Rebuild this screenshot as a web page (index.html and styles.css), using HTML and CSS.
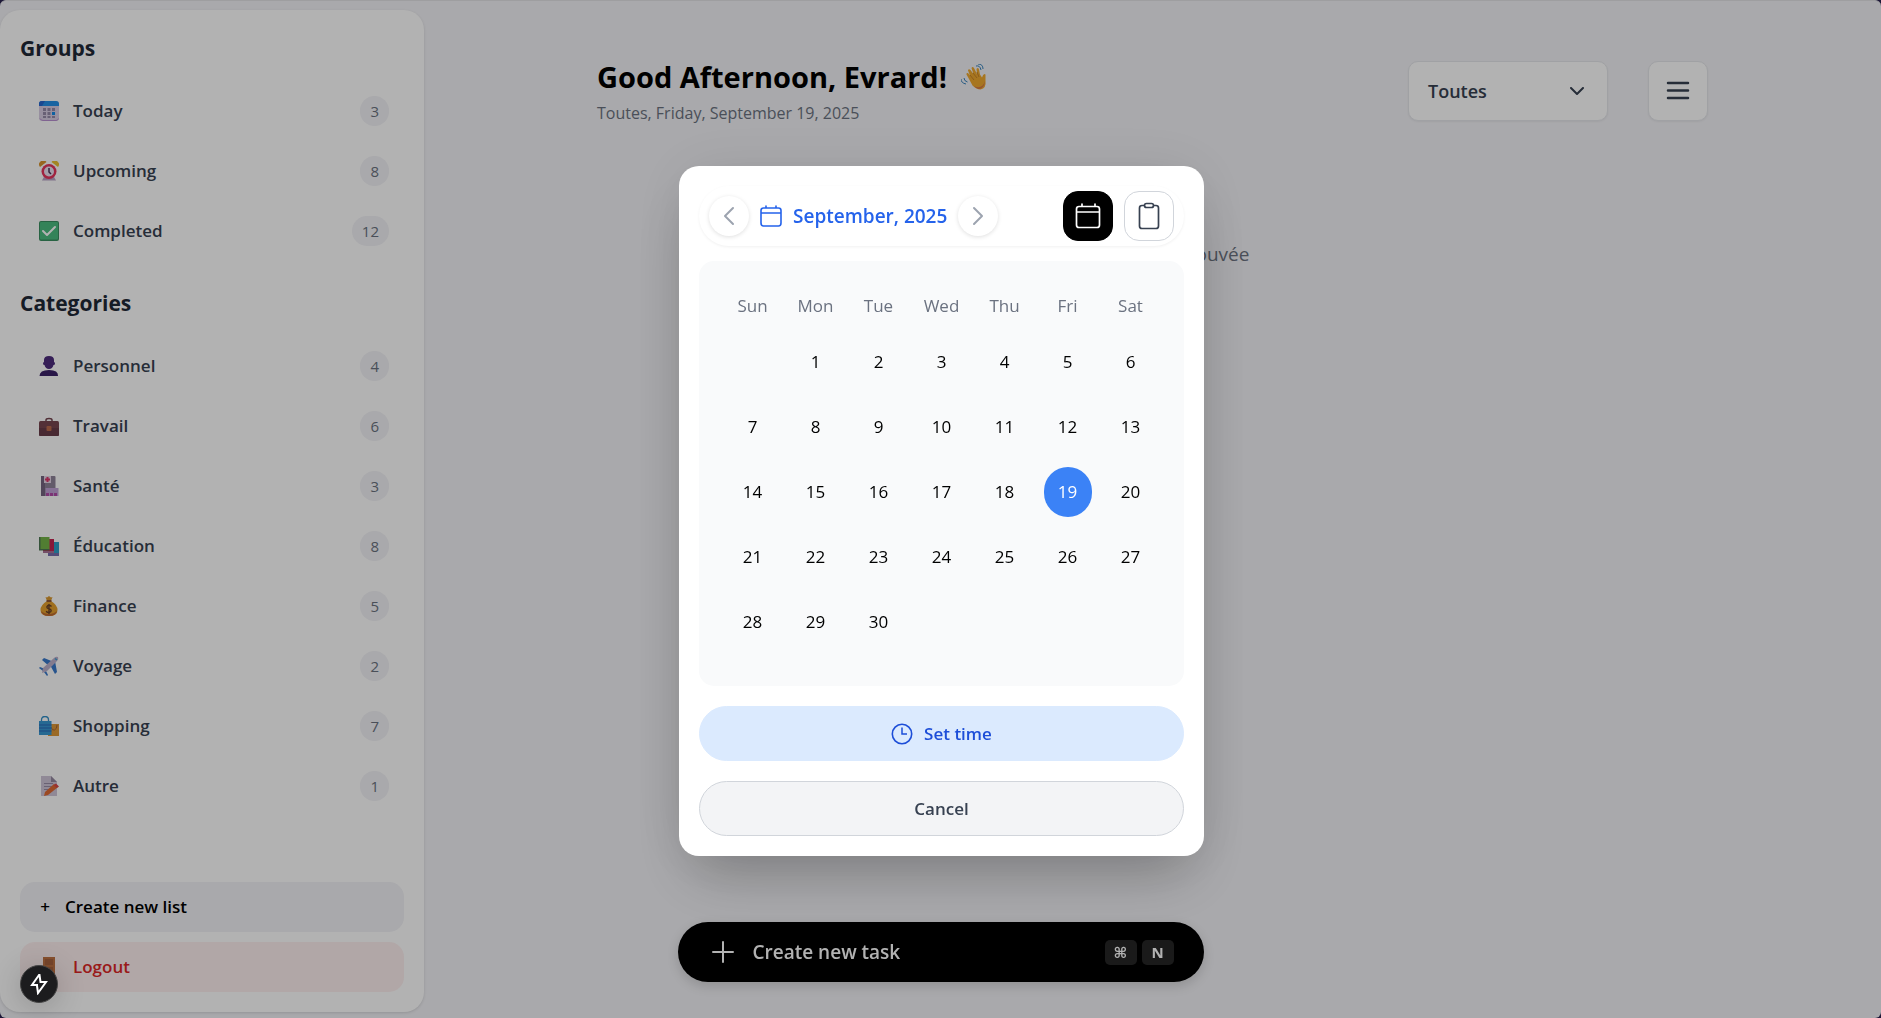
FILE: index.html
```html
<!DOCTYPE html>
<html lang="fr">
<head>
<meta charset="utf-8">
<meta name="viewport" content="width=device-width, initial-scale=1">
<title>Tasks</title>
<link rel="stylesheet" href="styles.css">
</head>
<body>
<div class="app">
  <aside class="sidebar">
    <h2 class="side-title">Groups</h2>
    <ul class="side-list">
      <li><a class="side-link" href="#today"><svg class="emoji" viewBox="0 0 20 20"><rect x="0" y="0" width="20" height="20" rx="3" fill="#d9cde4"/><path d="M0 5V3a3 3 0 0 1 3-3h14a3 3 0 0 1 3 3v2z" fill="#2490e8"/><path d="M0 5V3a3 3 0 0 1 3-3h3L3 5z" fill="#2766cf"/><path d="M1 17.500q1 2 3 2h13q2 0 2.500-2" fill="none" stroke="#b88fd0"/><g fill="#968aa8"><rect x="4" y="7" width="3" height="3"/><rect x="8.500" y="7" width="3" height="3"/><rect x="13" y="7" width="3" height="3"/><rect x="4" y="11" width="3" height="3"/><rect x="8.500" y="11" width="3" height="3"/><rect x="4" y="15" width="3" height="2"/><rect x="8.500" y="15" width="3" height="2"/><rect x="13" y="15" width="3" height="2"/></g><rect x="13" y="11" width="3" height="3" fill="#168be8"/></svg><span class="side-name">Today</span><span class="count">3</span></a></li>
      <li><a class="side-link" href="#upcoming"><svg class="emoji" viewBox="0 0 20 20"><path d="M3 19.500 5.500 15h9l2.500 4.500z" fill="#b9a3c6"/><path d="M1 6a4 4 0 0 1 6.500-5z" fill="#d9932e"/><path d="M19 6a4 4 0 0 0-6.500-5z" fill="#eac033"/><circle cx="10" cy="10.500" r="7.500" fill="#e5345c"/><circle cx="10" cy="10.500" r="5" fill="#ebe2f2"/><path d="M10 7v4l2 2" fill="none" stroke="#4d3358" stroke-width="1.500"/></svg><span class="side-name">Upcoming</span><span class="count">8</span></a></li>
      <li><a class="side-link" href="#completed"><svg class="emoji" viewBox="0 0 20 20"><rect width="20" height="20" rx="2" fill="#3a8f60"/><rect x="1" y="1" width="18" height="17.500" rx="1" fill="#4bbc80"/><path d="m4 10 4 4 8-8" fill="none" stroke="#fff" stroke-width="2" stroke-linecap="round" stroke-linejoin="round"/></svg><span class="side-name">Completed</span><span class="count">12</span></a></li>
    </ul>
    <h2 class="side-title side-title-next">Categories</h2>
    <ul class="side-list">
      <li><a class="side-link" href="#personnel"><svg class="emoji" viewBox="0 0 20 20"><path d="M5 4q0-4 5-4t5 4v2q1 0 1 1.500T14.500 9q-1 4-4.500 4T5.500 9Q4 9 4 7.500T5 6z" fill="#4c2c7c"/><path d="M.5 20q0-6 9.500-6t9 6z" fill="#3c2268"/></svg><span class="side-name">Personnel</span><span class="count">4</span></a></li>
      <li><a class="side-link" href="#travail"><svg class="emoji" viewBox="0 0 20 20"><path d="M7 5V4q0-1.500 3-1.500T13 4v1" fill="none" stroke="#754550" stroke-width="1.500"/><rect y="5" width="20" height="15" rx="1.500" fill="#784650"/><path d="M0 12h20v6.500q0 1.500-1.500 1.500h-17Q0 20 0 18.500z" fill="#673b48"/><rect x="7.500" y="10" width="5" height="5" rx="1" fill="#ba6b4d"/></svg><span class="side-name">Travail</span><span class="count">6</span></a></li>
      <li><a class="side-link" href="#sante"><svg class="emoji" viewBox="0 0 20 20"><rect x="2" width="14.500" height="20" rx="1" fill="#8f8399"/><rect x="2" width="4" height="20" fill="#746580"/><rect x="5" y="0" width="7" height="7" fill="#e4d5e5"/><path d="M8.500 1v5M6 3.500h5" stroke="#d8356a" stroke-width="2"/><rect x="6.500" y="12" width="13" height="8" fill="#c0a3d6"/><path d="M7 18.500h12" stroke="#b24ba8" stroke-width="3" stroke-dasharray="3 1"/></svg><span class="side-name">Santé</span><span class="count">3</span></a></li>
      <li><a class="side-link" href="#education"><svg class="emoji" viewBox="0 0 20 20"><path d="M9 6h11v13H9z" fill="#2d9fc8"/><path d="M9 17h11v3H9z" fill="#766ead"/><path d="M4 3h11v13H4z" fill="#c32452"/><path d="M4 15h11v2H4z" fill="#a97195"/><path d="M0 1h10.500v12.500H0z" fill="#75b448"/><path d="M0 1h1.500v12H0zM0 13h10.500v1.500H0z" fill="#4e7754"/></svg><span class="side-name">Éducation</span><span class="count">8</span></a></li>
      <li><a class="side-link" href="#finance"><svg class="emoji" viewBox="0 0 20 20"><path d="m6.500 1 1.500.5L10 0l2 1.500 1.500-.5-1.500 4H8z" fill="#d99830"/><path d="M8 5h4q6.500 4 6.500 9 0 6-8.500 6t-8.500-6q0-5 6.500-9z" fill="#e49f2d"/><path d="M2 15q1 5 8 5t8-5q-3 3-8 3t-8-3z" fill="#bd6932"/><path d="M7.500 5h5" stroke="#7b4130" stroke-width="1.500"/><path d="M12.500 10.500q-1-1.300-2.500-1.300T7.800 11q0 1.300 2.200 1.800t2.200 1.900-2.200 1.800-2.700-1.500M10 8v10" fill="none" stroke="#6b4228" stroke-width="1.400"/></svg><span class="side-name">Finance</span><span class="count">5</span></a></li>
      <li><a class="side-link" href="#voyage"><svg class="emoji" viewBox="0 0 20 20"><path d="m3 4 2-2 10 4-5 4zM16 5l2 11-2 2-5-9zM0 12l1-1 5 2-2 2zM7 15l2 4-1 1-3-4z" fill="#3979ca"/><path d="M19 1q1 2-1 4L8 15l-5 2 1-5 11-10q2-2 4-1z" fill="#bcb0cc"/><path d="M16 2.500 18 4" stroke="#3e9bd0" stroke-width="1.500"/></svg><span class="side-name">Voyage</span><span class="count">2</span></a></li>
      <li><a class="side-link" href="#shopping"><svg class="emoji" viewBox="0 0 20 20"><path d="M9 8h11v12H9z" fill="#dd9736"/><path d="M12 11q1 4 3.500 3T18 9" fill="none" stroke="#a56335"/><path d="M2.500 6V4q0-3.500 3.500-3.500T9.500 4v2" fill="none" stroke="#318fc7" stroke-width="1.300"/><path d="M0 5h12.500v14H0z" fill="#3797d2"/><path d="M0 9h12.500M0 12h12.500M0 15h12.500" stroke="#2b67b5"/></svg><span class="side-name">Shopping</span><span class="count">7</span></a></li>
      <li><a class="side-link" href="#autre"><svg class="emoji" viewBox="0 0 20 20"><path d="M2 0h10l6 6v14H2z" fill="#cfc4d7"/><path d="M12 0v6h6z" fill="#9489a0"/><path d="M5 7.500h9M5 10.500h9M5 13.500h6" stroke="#978ba5"/><path d="m6 16 9-8 3.500 3.500L9 19l-4 1z" fill="#df6933"/><path d="m14.500 9 2.500-1.500 3 3-2 1.500z" fill="#db4545"/></svg><span class="side-name">Autre</span><span class="count">1</span></a></li>
    </ul>
    <div class="side-actions">
      <button class="side-btn" type="button"><span class="plus">+</span>Create new list</button>
      <button class="side-btn side-btn-danger" type="button"><svg class="emoji" viewBox="0 0 20 20"><path d="M4 0h12v20H4z" fill="#c17342"/><path d="M6 2h8v6H6zM6 10h8v8H6z" fill="#a9633e"/></svg>Logout</button>
    </div>
  </aside>

  <main class="main">
    <header class="page-head">
      <div class="greeting">
        <h1 class="hello">Good Afternoon, Evrard! <svg class="wave" viewBox="0 0 26 26"><path d="M8 15 5.500 10.500q-.5-2 1.500-1.500l2 2.500L7 6.500q.5-2 2.500-.5l3 4-2-6q1-2 2.500 0l3 6-.5-5q1.500-2 2.500.5l1 5 2 3q1.500-5 3.500-3v6q1 8-5 9-4 0-8-4z" fill="#f0a92f"/><path d="M13 22q8 4 11-5-1 8-6.500 8-3-1-4.500-3z" fill="#d67943"/><path d="m9 11 4 5M12 9l4 5M16 8l2 5" stroke="#c98527" fill="none"/><path d="M15 2q4-1 5 4M17 0q5 0 5 5M3 14q0 3 3.500 4M0 15q0 4 5 5" fill="none" stroke="#3984bd"/></svg></h1>
        <p class="date">Toutes, Friday, September 19, 2025</p>
      </div>
      <button class="filter" type="button">Toutes<svg width="14" height="9" viewBox="0 0 14 9"><path d="m1 1 6 6 6-6" fill="none" stroke="currentColor" stroke-width="2" stroke-linecap="round" stroke-linejoin="round"/></svg></button>
      <button class="menu" type="button" aria-label="Menu"><svg width="24" height="20" viewBox="0 0 24 20"><path d="M2 2h20M2 9.500h20M2 17h20" fill="none" stroke="currentColor" stroke-width="2.500" stroke-linecap="round"/></svg></button>
    </header>
    <p class="empty">Aucune tâche trouvée</p>
  </main>
</div>

<button class="new-task" type="button">
  <svg width="22" height="22" viewBox="0 0 22 22"><path d="M11 1v20M1 11h20" fill="none" stroke="currentColor" stroke-width="2" stroke-linecap="round"/></svg>
  <span class="new-task-label">Create new task</span>
  <kbd class="key">⌘</kbd><kbd class="key">N</kbd>
</button>

<div class="scrim">
  <section class="dialog" role="dialog" aria-label="Date">
    <div class="dialog-head">
      <button class="round" type="button" aria-label="Previous month"><svg width="12" height="20" viewBox="0 0 12 20"><path d="m10 2-8 8 8 8" fill="none" stroke="currentColor" stroke-width="2" stroke-linecap="round" stroke-linejoin="round"/></svg></button>
      <div class="month"><svg width="22" height="22" viewBox="0 0 22 22"><path d="M1 5.500q0-2.500 2.500-2.500h15Q21 3 21 5.500v12.500q0 3-2.500 3h-15Q1 21 1 18zM1 8h20M6 1v2M16 1v2" fill="none" stroke="currentColor" stroke-width="1.600" stroke-linecap="round"/></svg>September, 2025</div>
      <button class="round" type="button" aria-label="Next month"><svg width="12" height="20" viewBox="0 0 12 20"><path d="m2 2 8 8-8 8" fill="none" stroke="currentColor" stroke-width="2" stroke-linecap="round" stroke-linejoin="round"/></svg></button>
      <button class="tab tab-on" type="button" aria-label="Calendar"><svg width="26" height="26" viewBox="0 0 26 26"><path d="M1.500 6q0-2.500 2.500-2.500h18q2.500 0 2.500 2.500v16q0 2.500-2.500 2.500H4Q1.500 24.500 1.500 22zM1.500 9h23M7 1v2.500M20 1v2.500" fill="none" stroke="currentColor" stroke-width="1.700" stroke-linecap="round"/></svg></button>
      <button class="tab" type="button" aria-label="Clipboard"><svg width="22" height="28" viewBox="0 0 22 28"><path d="M6.500 3.500H4q-2.500 0-2.500 2.500v18q0 2.500 2.500 2.500h14q2.500 0 2.500-2.500V6q0-2.500-2.500-2.500h-2.500M8.500 1.500h5q2 0 2 2t-2 2h-5q-2 0-2-2t2-2z" fill="none" stroke="currentColor" stroke-width="1.700" stroke-linejoin="round"/></svg></button>
    </div>
    <div class="panel">
      <table class="calendar">
        <thead><tr><th>Sun</th><th>Mon</th><th>Tue</th><th>Wed</th><th>Thu</th><th>Fri</th><th>Sat</th></tr></thead>
        <tbody>
          <tr><td></td><td><button class="day">1</button></td><td><button class="day">2</button></td><td><button class="day">3</button></td><td><button class="day">4</button></td><td><button class="day">5</button></td><td><button class="day">6</button></td></tr>
          <tr><td><button class="day">7</button></td><td><button class="day">8</button></td><td><button class="day">9</button></td><td><button class="day">10</button></td><td><button class="day">11</button></td><td><button class="day">12</button></td><td><button class="day">13</button></td></tr>
          <tr><td><button class="day">14</button></td><td><button class="day">15</button></td><td><button class="day">16</button></td><td><button class="day">17</button></td><td><button class="day">18</button></td><td><button class="day day-on">19</button></td><td><button class="day">20</button></td></tr>
          <tr><td><button class="day">21</button></td><td><button class="day">22</button></td><td><button class="day">23</button></td><td><button class="day">24</button></td><td><button class="day">25</button></td><td><button class="day">26</button></td><td><button class="day">27</button></td></tr>
          <tr><td><button class="day">28</button></td><td><button class="day">29</button></td><td><button class="day">30</button></td><td></td><td></td><td></td><td></td></tr>
        </tbody>
      </table>
    </div>
    <button class="wide wide-blue" type="button"><svg width="22" height="22" viewBox="0 0 22 22"><path d="M11 4.500V11h5" fill="none" stroke="currentColor" stroke-width="1.500"/><circle cx="11" cy="11" r="9.700" fill="none" stroke="currentColor" stroke-width="1.600"/></svg>Set time</button>
    <button class="wide" type="button">Cancel</button>
  </section>
</div>

<button class="dev" type="button" aria-label="Dev tools"><svg width="18" height="22" viewBox="0 0 18 22"><path d="M9 2 2 12h5v1l1 7 8-11h-5.500L9.500 2z" fill="none" stroke="#fff" stroke-width="2"/></svg></button>
</body>
</html>
```
FILE: styles.css
```css
* { box-sizing: border-box; }

body {
  margin: 0;
  background: #2a2350;
  color: #000;
  font: 17px/24px "Open Sans", "Noto Sans", sans-serif;
}

button {
  margin: 0;
  padding: 0;
  border: 0;
  background: none;
  color: inherit;
  font: inherit;
  cursor: pointer;
}

a { color: inherit; text-decoration: none; }
h1, h2, p, ul { margin: 0; padding: 0; }
ul { list-style: none; }
svg { display: block; flex: none; }

.app {
  display: flex;
  min-height: 100vh;
  padding: 9px 0 6px;
  border-top: 1px solid #e2e2e6;
  border-radius: 6px;
  background: #f2f2f6;
}

/* Sidebar */
.sidebar {
  display: flex;
  flex-direction: column;
  flex: none;
  width: 424px;
  padding: 20px;
  border-radius: 20px;
  background: #fff;
  box-shadow: 0 1px 3px rgba(0, 0, 0, .12);
}

.side-title {
  margin-bottom: 20px;
  color: #1f2937;
  font-size: 21px;
  font-weight: 700;
  line-height: 36px;
}

.side-title-next { margin-top: 29px; }

.side-list { display: grid; gap: 10px; }

.side-link {
  display: flex;
  align-items: center;
  gap: 14px;
  height: 50px;
  padding: 0 15px 0 19px;
  color: #374151;
  font-weight: 600;
}

.emoji { width: 20px; height: 20px; }
.side-name { flex: 1; }

.count {
  height: 30px;
  padding: 0 10px;
  border-radius: 15px;
  background: #f2f2f6;
  color: #6b7280;
  font-size: 15px;
  font-weight: 400;
  line-height: 30px;
}

.side-actions {
  display: grid;
  gap: 10px;
  margin-top: auto;
}

.side-btn {
  display: flex;
  align-items: center;
  gap: 14px;
  height: 50px;
  padding: 0 19px;
  border-radius: 15px;
  background: #f2f2f6;
  font-weight: 600;
}

.plus { width: 12px; }

.side-btn-danger {
  background: #fef0f0;
  color: #dc2626;
}

/* Main column */
.main { flex: 1; padding: 51px 20px 0; }

.page-head {
  display: flex;
  align-items: flex-start;
  max-width: 1111px;
  margin: 0 auto;
}

.greeting { flex: 1; }

.hello {
  display: flex;
  align-items: center;
  gap: 14px;
  font-size: 29px;
  font-weight: 700;
  line-height: 32px;
}

.wave { width: 26px; height: 26px; }

.date {
  margin-top: 8px;
  color: #6b7280;
  font-size: 16px;
  line-height: 24px;
}

.filter, .menu {
  display: flex;
  align-items: center;
  height: 60px;
  border: 1px solid #e5e7eb;
  border-radius: 10px;
  background: #fff;
  color: #374151;
  box-shadow: 0 1px 2px rgba(0, 0, 0, .05);
}

.filter {
  justify-content: space-between;
  width: 200px;
  margin-right: 40px;
  padding: 0 23px 0 19px;
  font-size: 18px;
  font-weight: 600;
}

.menu { justify-content: center; width: 60px; }

.empty {
  margin-top: 115px;
  color: #6b7280;
  font-size: 19px;
  line-height: 28px;
  text-align: center;
}

/* Floating bar */
.new-task {
  position: fixed;
  right: 0;
  bottom: 36px;
  left: 0;
  display: flex;
  align-items: center;
  gap: 5px;
  width: 526px;
  height: 60px;
  margin: 0 auto;
  padding: 0 30px 0 34px;
  border-radius: 30px;
  background: #000;
  color: #fff;
  font-size: 19px;
  font-weight: 600;
  box-shadow: 0 4px 12px rgba(0, 0, 0, .15);
}

.new-task-label { flex: 1; padding-left: 14px; text-align: left; }

.key {
  width: 32px;
  height: 25px;
  border-radius: 5px;
  background: #262626;
  font: 700 15px/25px "Open Sans", "DejaVu Sans", sans-serif;
  text-align: center;
}

/* Date dialog */
.scrim {
  position: fixed;
  inset: 0;
  display: flex;
  align-items: center;
  justify-content: center;
  padding: 4px 0 0 2px;
  background: rgba(0, 0, 0, .3);
}

.dialog {
  width: 525px;
  padding: 20px;
  border-radius: 20px;
  background: #fff;
  box-shadow: 0 30px 60px -15px rgba(0, 0, 0, .25), 0 0 60px rgba(0, 0, 0, .08);
}

.dialog-head {
  display: flex;
  align-items: center;
  gap: 11px;
  height: 60px;
  padding: 0 10px;
  border-radius: 30px;
  box-shadow: 0 1px 3px rgba(0, 0, 0, .06);
}

.round, .tab {
  display: flex;
  align-items: center;
  justify-content: center;
  flex: none;
}

.round {
  width: 40px;
  height: 40px;
  border-radius: 50%;
  color: #9ca3af;
  box-shadow: 0 1px 4px rgba(0, 0, 0, .13);
}

.month {
  display: flex;
  align-items: center;
  gap: 11px;
  color: #2563eb;
  font-size: 19px;
  font-weight: 600;
}

.tab {
  width: 50px;
  height: 50px;
  border: 1px solid #d1d5db;
  border-radius: 15px;
  color: #374151;
}

.tab-on {
  margin-left: auto;
  border-color: #000;
  background: #000;
  color: #fff;
}

.panel {
  height: 425px;
  margin-top: 15px;
  padding: 22px;
  border-radius: 15px;
  background: #f9fafb;
}

.calendar {
  width: 100%;
  border-collapse: collapse;
  table-layout: fixed;
}

.calendar th {
  height: 46px;
  padding: 0;
  color: #6b7280;
  font-weight: 400;
}

.calendar td {
  height: 65px;
  padding: 0;
  text-align: center;
}

.day {
  width: 48px;
  height: 50px;
  border-radius: 25px;
}

.day-on { background: #3b82f6; color: #fff; }

.wide {
  display: flex;
  align-items: center;
  justify-content: center;
  gap: 11px;
  width: 100%;
  height: 55px;
  margin-top: 20px;
  border: 1px solid #d1d5db;
  border-radius: 28px;
  background: #f3f4f6;
  color: #374151;
  font-weight: 600;
}

.wide-blue {
  border-color: #dbeafe;
  background: #dbeafe;
  color: #1d4ed8;
}

/* Developer badge */
.dev {
  position: fixed;
  bottom: 15px;
  left: 20px;
  display: flex;
  align-items: center;
  justify-content: center;
  width: 38px;
  height: 38px;
  border: 1px solid #444;
  border-radius: 50%;
  background: #1c1c1e;
  box-shadow: 0 4px 30px rgba(0, 0, 0, .2);
}
```
